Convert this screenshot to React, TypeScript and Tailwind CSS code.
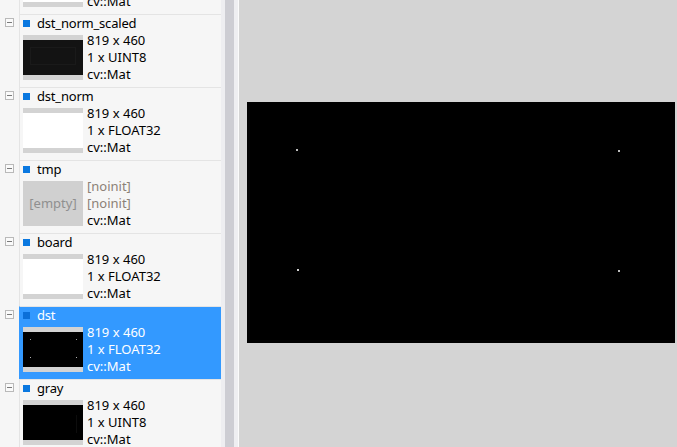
import React from 'react';

type Kind = 'dark' | 'white' | 'empty' | 'dots' | 'black';

interface MatItem {
    name: string;
    kind: Kind;
    size: string;
    type: string;
    selected?: boolean;
}

const items: MatItem[] = [
    { name: 'src', kind: 'white', size: '819 x 460', type: '1 x FLOAT32' },
    { name: 'dst_norm_scaled', kind: 'dark', size: '819 x 460', type: '1 x UINT8' },
    { name: 'dst_norm', kind: 'white', size: '819 x 460', type: '1 x FLOAT32' },
    { name: 'tmp', kind: 'empty', size: '[noinit]', type: '[noinit]' },
    { name: 'board', kind: 'white', size: '819 x 460', type: '1 x FLOAT32' },
    { name: 'dst', kind: 'dots', size: '819 x 460', type: '1 x FLOAT32', selected: true },
    { name: 'gray', kind: 'black', size: '819 x 460', type: '1 x UINT8' },
];

const Thumb: React.FC<{ kind: Kind }> = ({ kind }) => {
    if (kind === 'empty') {
        return (
            <div className="w-[60px] h-[45px] bg-[#d0d0d0] flex items-center justify-center text-[#8f8f8f] shrink-0">
                [empty]
            </div>
        );
    }
    return (
        <div className="w-[60px] h-[45px] bg-[#d3d3d3] flex items-center shrink-0">
            <svg width="60" height="35" viewBox="0 0 60 35" className="block">
                {kind === 'white' && <rect width="60" height="35" fill="#ffffff" />}
                {kind === 'dark' && (
                    <>
                        <rect width="60" height="35" fill="#131313" />
                        <rect x="7.5" y="7.5" width="45" height="17" fill="none" stroke="#1a1a1a" />
                    </>
                )}
                {kind === 'black' && (
                    <>
                        <rect width="60" height="35" fill="#000000" />
                        <rect x="53" y="10" width="1" height="18" fill="#0d0d0d" />
                    </>
                )}
                {kind === 'dots' && (
                    <>
                        <rect width="60" height="35" fill="#000000" />
                        <rect x="7" y="7" width="1" height="1" fill="#9a9a9a" />
                        <rect x="53" y="7" width="1" height="1" fill="#9a9a9a" />
                        <rect x="7" y="25" width="1" height="1" fill="#b0b0b0" />
                        <rect x="53" y="25" width="1" height="1" fill="#b0b0b0" />
                    </>
                )}
            </svg>
        </div>
    );
};

const MatRow: React.FC<{ item: MatItem }> = ({ item }) => {
    const sel = !!item.selected;
    const noinit = item.kind === 'empty';
    return (
        <div className="flex h-[73px] shrink-0">
            {/* expand gutter */}
            <div className="w-[19px] shrink-0 pt-[4px] pl-[5px]">
                <div className="w-[9px] h-[9px] border border-[#b9b9b9] bg-[#fafafa] flex items-center justify-center">
                    <div className="w-[5px] h-px bg-[#7a7a7a]" />
                </div>
            </div>
            <div
                className={`flex-1 border-t border-[#e4e4e4] ${
                    sel ? 'bg-[#3399ff] text-white border-l border-l-[#3399ff]' : 'border-l border-l-[#e4e4e4]'
                }`}
            >
                <div className="h-[17px] flex items-center pl-[3px] gap-[7px]">
                    <div className={`w-[7px] h-[7px] ${sel ? 'bg-[#0b6fd8]' : 'bg-[#0a78e0]'}`} />
                    <span className="tracking-[-0.2px]">{item.name}</span>
                </div>
                <div className="flex pl-[3px] gap-[4px]">
                    <div className="pt-[3px]">
                        <Thumb kind={item.kind} />
                    </div>
                    <div className="flex flex-col">
                        <span className={noinit ? 'text-[#8c8177]' : ''}>{item.size}</span>
                        <span className={noinit ? 'text-[#8c8177]' : ''}>{item.type}</span>
                        <span>cv::Mat</span>
                    </div>
                </div>
            </div>
        </div>
    );
};

export default function App() {
    return (
        <div
            className="flex w-[677px] h-[447px] overflow-hidden text-[13px] leading-[17px] text-black"
            style={{ fontFamily: '"Noto Sans", "Open Sans", sans-serif' }}
        >
            <div className="w-[221px] shrink-0 bg-[#f6f6f6] overflow-hidden">
                <div className="flex flex-col -mt-[59px]">
                    {items.map((item) => (
                        <MatRow key={item.name} item={item} />
                    ))}
                </div>
            </div>

            {/* splitter / scrollbar */}
            <div className="w-[17px] shrink-0 bg-[#eeeef1] flex pl-[4px]">
                <div className="w-[9px] h-full bg-[#cdcdd3]" />
            </div>
            <div className="w-px shrink-0 bg-[#fbfbfb]" />

            {/* image view */}
            <div className="flex-1 bg-[#d4d4d4] flex items-center pl-[8px] pb-[2px]">
                <svg width="428" height="241" viewBox="0 0 428 241" className="block shrink-0">
                    <rect width="428" height="241" fill="#000000" />
                    <rect x="49" y="47" width="2" height="2" fill="#bdbdbd" />
                    <rect x="371" y="48" width="2" height="2" fill="#bdbdbd" />
                    <rect x="50" y="167" width="2" height="2" fill="#d0d0d0" />
                    <rect x="371" y="168" width="2" height="2" fill="#bdbdbd" />
                </svg>
            </div>
        </div>
    );
}
